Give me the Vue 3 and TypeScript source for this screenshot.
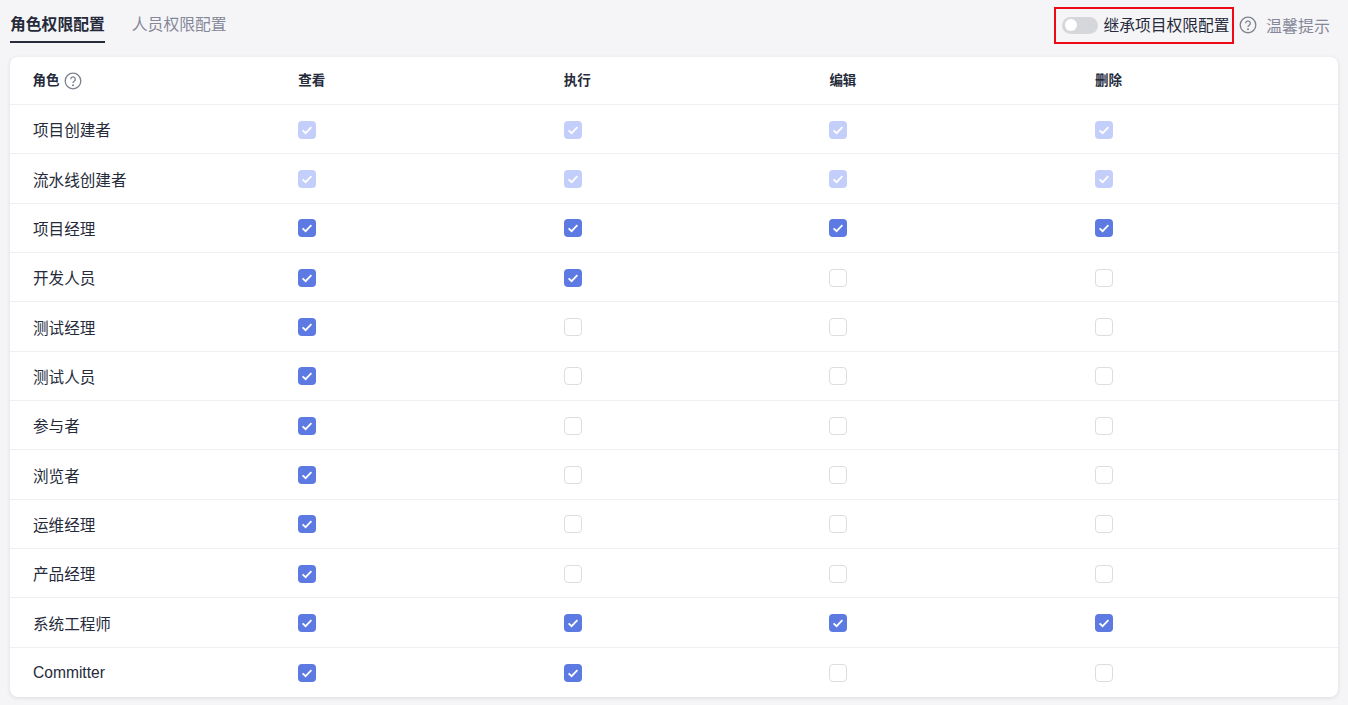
<script setup lang="ts">
type Row = { name: string; perms: number[]; locked?: boolean }
const columns = ['查看', '执行', '编辑', '删除']
const rows: Row[] = [
  { name: '项目创建者', perms: [1, 1, 1, 1], locked: true },
  { name: '流水线创建者', perms: [1, 1, 1, 1], locked: true },
  { name: '项目经理', perms: [1, 1, 1, 1] },
  { name: '开发人员', perms: [1, 1, 0, 0] },
  { name: '测试经理', perms: [1, 0, 0, 0] },
  { name: '测试人员', perms: [1, 0, 0, 0] },
  { name: '参与者', perms: [1, 0, 0, 0] },
  { name: '浏览者', perms: [1, 0, 0, 0] },
  { name: '运维经理', perms: [1, 0, 0, 0] },
  { name: '产品经理', perms: [1, 0, 0, 0] },
  { name: '系统工程师', perms: [1, 1, 1, 1] },
  { name: 'Committer', perms: [1, 1, 0, 0] },
]
</script>

<template>
  <div class="page">
    <header class="top">
      <nav class="tabs">
        <span class="tab active">角色权限配置</span>
        <span class="tab">人员权限配置</span>
      </nav>
      <div class="actions">
        <div class="inherit">
          <span class="switch"><span class="knob"></span></span>
          <span class="inherit-label">继承项目权限配置</span>
        </div>
        <svg class="help help-top" viewBox="0 0 18 18" aria-hidden="true">
          <circle cx="9" cy="9" r="7.8" />
          <path d="M6.7 7.2a2.3 2.3 0 1 1 3.5 2c-.8.5-1.2 1-1.2 1.8" />
          <circle class="dot" cx="9" cy="13.2" r="1" />
        </svg>
        <span class="tip">温馨提示</span>
      </div>
    </header>

    <section class="card">
      <div class="row head">
        <div class="cell">
          <span>角色</span>
          <svg class="help help-head" viewBox="0 0 18 18" aria-hidden="true">
            <circle cx="9" cy="9" r="7.8" />
            <path d="M6.7 7.2a2.3 2.3 0 1 1 3.5 2c-.8.5-1.2 1-1.2 1.8" />
            <circle class="dot" cx="9" cy="13.2" r="1" />
          </svg>
        </div>
        <div v-for="c in columns" :key="c" class="cell">{{ c }}</div>
      </div>
      <div v-for="r in rows" :key="r.name" class="row body">
        <div class="cell">
          <span class="name">{{ r.name }}</span>
        </div>
        <div v-for="(p, i) in r.perms" :key="i" class="cell">
          <span class="box" :class="{ on: p === 1, locked: r.locked }">
            <svg v-if="p === 1" viewBox="0 0 18 18" aria-hidden="true">
              <path d="M4.6 9.3l3 2.9 5.8-6" />
            </svg>
          </span>
        </div>
      </div>
    </section>
  </div>
</template>

<style>
html, body { margin: 0; background: #f5f5f7; }
</style>

<style scoped>
.page {
  width: 1348px;
  height: 705px;
  box-sizing: border-box;
  padding: 0 10px;
  background: #f5f5f7;
  overflow: hidden;
  font-family: "Noto Sans CJK SC", "Liberation Sans", sans-serif;
  color: #262b3b;
}
.top {
  height: 57px;
  display: flex;
  justify-content: space-between;
  align-items: flex-start;
}
.tabs { display: flex; gap: 27px; }
.tab {
  display: block;
  height: 43px;
  box-sizing: border-box;
  line-height: 47px;
  font-size: 15.8px;
  color: #85889a;
}
.tab.active {
  color: #262b3b;
  font-weight: 700;
  border-bottom: 2px solid #262b3b;
}
.actions {
  display: flex;
  align-items: center;
  height: 50px;
  margin-right: 8px;
}
.inherit {
  display: flex;
  align-items: center;
  box-sizing: border-box;
  width: 180px;
  height: 37px;
  padding-left: 6px;
  border: 2px solid #ee0a14;
  flex: none;
}
.switch {
  width: 36px;
  height: 17px;
  border-radius: 9px;
  background: #d6d7da;
  display: flex;
  align-items: center;
  padding-left: 3px;
  box-sizing: border-box;
  flex: none;
}
.knob { width: 12px; height: 12px; border-radius: 50%; background: #fff; }
.inherit-label {
  margin-left: 5.5px;
  font-size: 15.75px;
  line-height: 20px;
  white-space: nowrap;
  color: #262b3b;
}
.help {
  width: 18px;
  height: 18px;
  margin-left: 5px;
  flex: none;
  fill: none;
  stroke: #7d808e;
  stroke-width: 1.3;
}
.help .dot { fill: #7d808e; stroke: none; }
.help-head { margin-top: 4px; margin-left: 4px; }
.tip {
  margin-left: 9px;
  font-size: 16px;
  line-height: 20px;
  margin-bottom: 1px;
  color: #85889a;
  white-space: nowrap;
}
.card {
  height: 640px;
  background: #fff;
  border-radius: 8px;
  box-shadow: 0 1px 4px rgba(40, 44, 60, 0.12);
  overflow: hidden;
}
.row {
  display: grid;
  grid-template-columns: repeat(5, 20%);
  align-items: center;
  box-sizing: border-box;
  border-bottom: 1px solid #eeeff3;
}
.row.head { height: 48px; font-size: 13.5px; font-weight: 700; }
.row.head .cell { padding-bottom: 4px; }
.row.body { height: 49.35px; font-size: 15.6px; }
.row.body:last-child { border-bottom: 0; }
.row.body:last-child .name { margin-top: 2px; }
.cell {
  display: flex;
  align-items: center;
  padding-left: 22.6px;
  font-family: "Liberation Sans", "Noto Sans CJK SC", sans-serif;
}
.name { display: block; margin-left: 0.4px; }
.box {
  width: 18px;
  height: 18px;
  margin-top: 0.8px;
  box-sizing: border-box;
  border: 1px solid #dcdde1;
  border-radius: 4px;
  background: #fff;
  display: block;
}
.box.on { background: #5c7ae2; border: 0; }
.box.on.locked { background: #c3cffa; }
.box svg { display: block; width: 18px; height: 18px; }
.box path { fill: none; stroke: #fff; stroke-width: 1.8; }
</style>
